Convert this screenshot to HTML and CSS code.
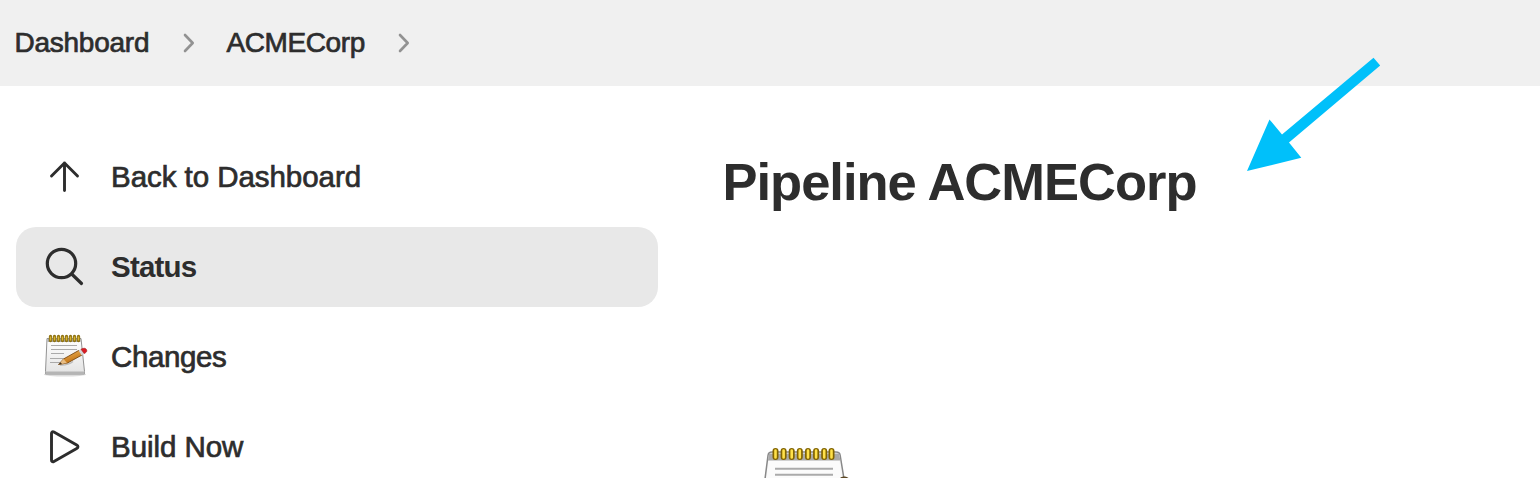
FILE: index.html
```html
<!DOCTYPE html>
<html lang="en">
<head>
<meta charset="utf-8">
<title>ACMECorp</title>
<link rel="stylesheet" href="styles.css">
</head>
<body>
<nav class="breadcrumbs">
  <a class="crumb">Dashboard</a>
  <svg class="chevron" width="14" height="22" viewBox="0 0 14 22"><path d="M3 3l7.700 8L3 19"/></svg>
  <a class="crumb crumb-project">ACMECorp</a>
  <svg class="chevron" width="14" height="22" viewBox="0 0 14 22"><path d="M3 3l7.700 8L3 19"/></svg>
</nav>
<div class="page">
  <aside class="sidebar">
    <a class="task">
      <svg class="icon line" viewBox="0 0 48 48"><path d="M24.500 37.500V10M11.500 23L24.500 10l13 13"/></svg>
      <span class="label">Back to Dashboard</span>
    </a>
    <a class="task active">
      <svg class="icon line search" viewBox="0 0 48 48"><circle cx="21.500" cy="20.500" r="14.200"/><path d="M31.700 31L41.500 40.500"/></svg>
      <span class="label">Status</span>
    </a>
    <a class="task">
      <svg class="icon" viewBox="-1 -1 48 48">
        <defs>
          <linearGradient id="paper" x1="0" y1="0" x2="0" y2="1"><stop offset="0" stop-color="#fff"/><stop offset="1" stop-color="#e3e3e3"/></linearGradient>
          <linearGradient id="wood" x1="0" y1="0" x2="0.500" y2="1"><stop offset="0" stop-color="#f7bf66"/><stop offset="1" stop-color="#bd6b0b"/></linearGradient>
        </defs>
        <ellipse cx="24" cy="40.500" rx="21" ry="2" fill="#ddd"/>
        <path d="M6 4.500h34l3.500 33v2.500h-39v-2.500z" fill="url(#paper)" stroke="#929292"/>
        <path d="M6.500 5h33v3h-33z" fill="#aaa"/>
        <path d="M4.500 37.500h39v2.500h-39z" fill="#b5b5b5"/>
        <path d="M10 11.500h26M10 15.500h26M10 19.500h13M9 24.500h21M9 28.500h14" stroke="#aaa" stroke-width="1.200"/>
        <path d="M9.500 2.500v4M13.500 2.500v4M17.500 2.500v4M21.500 2.500v4M25.500 2.500v4M29.500 2.500v4M33.500 2.500v4M37.500 2.500v4" stroke="#8d7010" stroke-width="3.300" stroke-linecap="round"/>
        <path d="M9.500 2.500v4M13.500 2.500v4M17.500 2.500v4M21.500 2.500v4M25.500 2.500v4M29.500 2.500v4M33.500 2.500v4M37.500 2.500v4" stroke="#d6b334" stroke-width="1.500"/>
        <path d="M19 31c5 .5 9-.5 13-3.500" stroke="#bbb" stroke-width="1.500" fill="none"/>
        <path d="M17.500 30.500l5-5.500L38 16.300l3 4.700-14.500 8z" fill="url(#wood)" stroke="#7b4a13" stroke-width=".9"/>
        <path d="M17.500 30.500l5-5.500 3.500 4z" fill="#e8bd83"/>
        <path d="M17.500 30.500l2-2.300 1.500 1.700z" fill="#443322"/>
        <path d="M37.500 16.500l3-1.700 3 4.700-3 1.700z" fill="#d5d5d5"/>
        <path d="M40 15.200c2.500-1.500 5-1.200 5.700.8.500 1.500-.2 2.300-2.500 3.600z" fill="#db1b24" stroke="#a32121" stroke-width=".6"/>
      </svg>
      <span class="label label-changes">Changes</span>
    </a>
    <a class="task">
      <svg class="icon line" viewBox="0 0 48 48"><path d="M11.500 10.500v26.500c0 1.600 1 2.300 2.400 1.500l22.800-13c1.700-1 1.700-2.500 0-3.500L13.900 9c-1.400-.8-2.400-.1-2.400 1.500z"/></svg>
      <span class="label">Build Now</span>
    </a>
  </aside>
  <main class="content">
    <h1 class="title">Pipeline ACMECorp</h1>
    <svg class="notepad" width="96" height="36" viewBox="0 0 96 36">
      <path d="M12 37L15 13.500q.4-3.500 4-3.500h64q3.800 0 4.200 3.500L91 37z" fill="#f8f8f8" stroke="#888" stroke-width="1.500"/>
      <path d="M16 11.500h70l1.500 7H15z" fill="#a9a9a9"/>
      <path d="M16 19h70l3 18H14z" fill="#fbfbfb"/>
      <path d="M22 26.700h58M22 32.700h58" stroke="#aaa" stroke-width="2"/>
      <path d="M22.500 9v6M30.600 9v6M38.700 9v6M46.800 9v6M55 9v6M63.100 9v6M71.200 9v6M78.500 9v6" stroke="#826400" stroke-width="6" stroke-linecap="round"/>
      <path d="M22.500 8.500v7M30.600 8.500v7M38.700 8.500v7M46.800 8.500v7M55 8.500v7M63.100 8.500v7M71.200 8.500v7M78.500 8.500v7" stroke="#ffe14a" stroke-width="2.600" stroke-linecap="round"/>
      <path d="M87 36q1.500-2 5-1.400 2 .4 3.500 1.400z" fill="#5c4824"/>
    </svg>
  </main>
</div>
<svg class="pointer" width="170" height="140" viewBox="0 0 170 140"><path d="M17 126L39.500 74.500 52 89.500 143.500 12.800 150.200 20.500 59 97.500 71.300 112.800z"/></svg>
</body>
</html>
```
FILE: styles.css
```css
* { box-sizing: border-box; }
body {
  margin: 0;
  height: 478px;
  overflow: hidden;
  background: #fff;
  color: #2d2d2d;
  font-family: "Liberation Sans", Arial, sans-serif;
}
.breadcrumbs {
  display: flex;
  align-items: center;
  height: 86px;
  padding-left: 14.5px;
  background: #f0f0f0;
}
.crumb {
  width: 137px;
  font-size: 28px;
  line-height: 32px;
  letter-spacing: -.25px;
  white-space: nowrap;
  -webkit-text-stroke: .7px #2d2d2d;
}
.crumb-project { width: 140px; margin-left: 31px; letter-spacing: -.4px; }
.chevron {
  margin-left: 30px;
  fill: none;
  stroke: #929292;
  stroke-width: 2.6;
  stroke-linecap: round;
  stroke-linejoin: round;
}
.page { display: flex; height: 392px; }
.sidebar {
  display: flex;
  flex: none;
  flex-direction: column;
  gap: 10px;
  width: 658px;
  padding: 51px 0 0 16px;
}
.task {
  display: flex;
  flex: none;
  align-items: center;
  gap: 23px;
  height: 80px;
  padding-left: 24px;
  border-radius: 20px;
}
.active { background: #e8e8e8; }
.icon { flex: none; width: 48px; height: 48px; }
.line {
  fill: none;
  stroke: #2d2d2d;
  stroke-width: 2.9;
  stroke-linecap: round;
  stroke-linejoin: round;
}
.search { stroke-width: 3.2; }
.label {
  font-size: 29.5px;
  line-height: 34px;
  letter-spacing: -.05px;
  -webkit-text-stroke: .7px #2d2d2d;
}
.label-changes { letter-spacing: -.4px; }
.active .label { font-weight: 700; letter-spacing: -.8px; -webkit-text-stroke: 0; }
.content {
  display: flex;
  flex: 1;
  flex-direction: column;
  align-items: flex-start;
  justify-content: space-between;
  padding: 66px 0 0 64.5px;
}
.title {
  margin: 0;
  font-size: 52.5px;
  line-height: 60px;
  letter-spacing: -1px;
  white-space: nowrap;
}
.notepad { margin-left: 30.5px; }
.pointer { position: absolute; left: 1230px; top: 45px; fill: #00c0fa; }
```
